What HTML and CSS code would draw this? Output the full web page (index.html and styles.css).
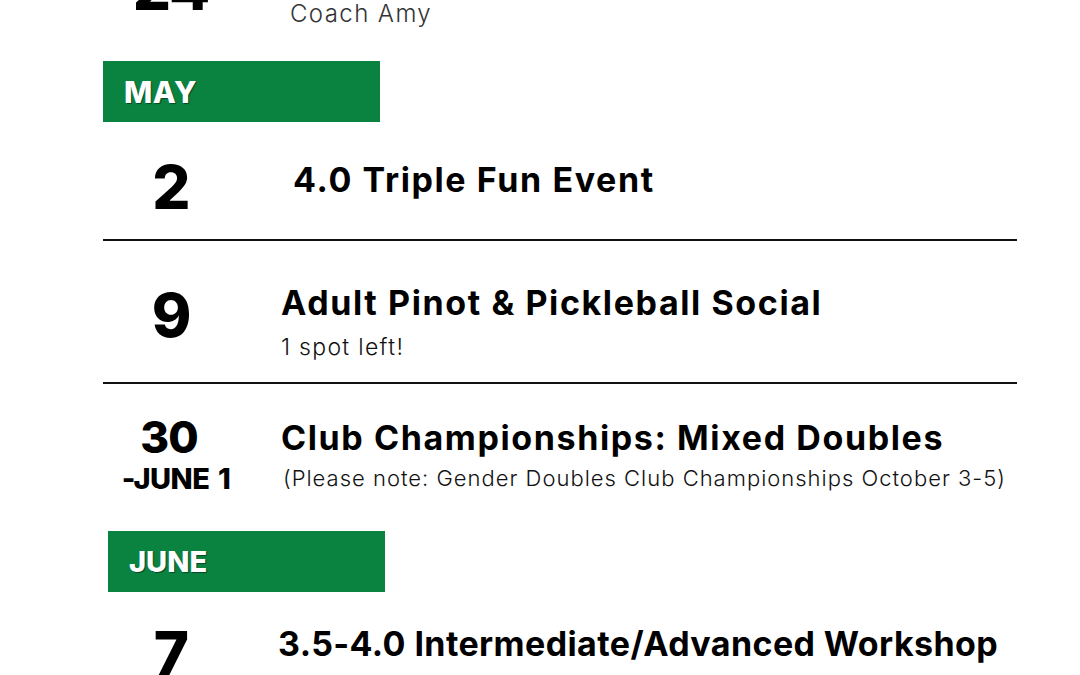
FILE: index.html
```html
<!DOCTYPE html>
<html>
<head>
<meta charset="utf-8">
<link rel="stylesheet" href="styles.css">
</head>
<body>
<main class="schedule">
  <div class="event event-top">
    <div class="date">24</div>
    <div class="info"><div class="sub sub-coach">Coach Amy</div></div>
  </div>

  <div class="month month-may"><span>MAY</span></div>

  <div class="event event-2 ruled">
    <div class="date">2</div>
    <div class="info"><div class="title title-indent">4.0 Triple Fun Event</div></div>
  </div>

  <div class="event event-9 ruled">
    <div class="date">9</div>
    <div class="info">
      <div class="title">Adult Pinot &amp; Pickleball Social</div>
      <div class="sub sub-spot">1 spot left!</div>
    </div>
  </div>

  <div class="event event-30">
    <div class="date date-range"><span class="d-main">30</span><span class="d-end">-JUNE 1</span></div>
    <div class="info">
      <div class="title">Club Championships: Mixed Doubles</div>
      <div class="sub sub-note">(Please note: Gender Doubles Club Championships October 3-5)</div>
    </div>
  </div>

  <div class="month month-june"><span>JUNE</span></div>

  <div class="event event-7">
    <div class="date">7</div>
    <div class="info"><div class="title title-narrow">3.5-4.0 Intermediate/Advanced Workshop</div></div>
  </div>
</main>
</body>
</html>
```

FILE: styles.css
```css
html, body {
  margin: 0;
  padding: 0;
  background: #ffffff;
}
body {
  font-family: "Inter", "Open Sans", sans-serif;
  color: #000;
  overflow: hidden;
  height: 675px;
}
.schedule {
  width: 914px;
  margin-left: 103px;
  margin-top: -46px;
  display: flex;
  flex-direction: column;
}
.event {
  display: flex;
  align-items: flex-start;
}
.ruled {
  border-bottom: 2px solid #111;
}
.date {
  width: 136px;
  flex: none;
  text-align: center;
  font-weight: 800;
  font-size: 60px;
  line-height: 60px;
  letter-spacing: -1px;
}
.info {
  padding-left: 42px;
  display: flex;
  flex-direction: column;
}
.title {
  font-weight: 700;
  font-size: 34px;
  line-height: 40px;
  letter-spacing: 1.6px;
  white-space: nowrap;
}
.title-indent {
  padding-left: 12px;
}
.title-narrow {
  letter-spacing: 0.4px;
  margin-left: -3px;
}
.sub {
  font-weight: 300;
  font-size: 22px;
  line-height: 28px;
  color: #111;
  white-space: nowrap;
}
.sub-coach {
  padding-left: 9px;
  padding-top: 46px;
  font-size: 24px;
  letter-spacing: 1.4px;
  color: #333;
}
.sub-spot {
  padding-top: 10px;
  font-size: 23px;
  letter-spacing: 1.3px;
}
.event-top {
  height: 107px;
}
.event-top .date {
  padding-top: 4px;
}
.month {
  width: 277px;
  height: 61px;
  background: #0a8341;
  display: flex;
  align-items: center;
  padding-left: 21px;
  box-sizing: border-box;
}
.month span {
  color: #fff;
  font-weight: 800;
  font-size: 30px;
  letter-spacing: 0.5px;
  text-shadow: 1px 1px 1px rgba(0,0,0,0.45);
}
.month-june {
  margin-left: 5px;
  margin-top: 0;
}
.month-june span {
  font-size: 29px;
  letter-spacing: 0;
}
.event-2 {
  height: 117px;
}
.event-2 .date { padding-top: 35px; }
.event-2 .info { padding-top: 38px; }
.event-9 {
  height: 141px;
}
.event-9 .date { padding-top: 44px; }
.event-9 .info { padding-top: 42px; }
.event-30 {
  height: 147px;
}
.date-range {
  display: flex;
  flex-direction: column;
  align-items: center;
  padding-top: 30px;
}
.d-main {
  font-size: 44px;
  line-height: 46px;
  margin-left: -4px;
}
.d-end {
  font-size: 29px;
  line-height: 38px;
  letter-spacing: -0.6px;
  margin-left: 10px;
  word-spacing: 3px;
}
.event-30 .info { padding-top: 34px; }
.sub-note {
  padding-left: 2px;
  padding-top: 6px;
  letter-spacing: 1px;
}
.event-7 .date { padding-top: 31px; }
.event-7 .info { padding-top: 32px; }
```
